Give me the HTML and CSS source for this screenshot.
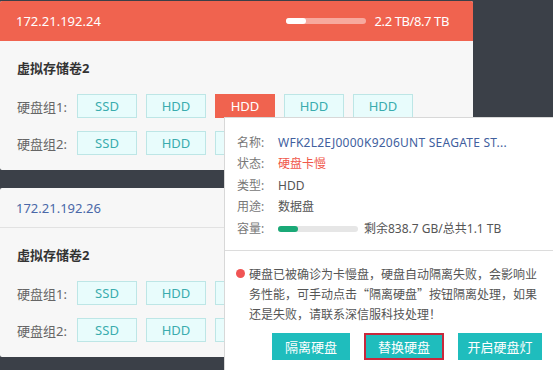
FILE: index.html
```html
<!DOCTYPE html>
<html lang="zh-CN">
<head>
  <meta charset="UTF-8">
  <meta name="viewport" content="width=device-width, initial-scale=1.0">
  <title>存储节点</title>
  <link rel="stylesheet" href="styles.css">
</head>
<body>
  <div class="node-list">
    <div class="node-card alert">
      <div class="node-header">
        <span class="node-ip">172.21.192.24</span>
        <div class="node-usage">
          <div class="usage-bar"><div class="usage-fill" style="width: 26%"></div></div>
          <span class="usage-text">2.2 TB/8.7 TB</span>
        </div>
      </div>
      <div class="node-body">
        <h3 class="volume-title">虚拟存储卷2</h3>
        <div class="disk-row">
          <span class="disk-label">硬盘组1:</span>
          <span class="disk">SSD</span>
          <span class="disk">HDD</span>
          <span class="disk disk-bad">HDD</span>
          <span class="disk">HDD</span>
          <span class="disk">HDD</span>
        </div>
        <div class="disk-row">
          <span class="disk-label">硬盘组2:</span>
          <span class="disk">SSD</span>
          <span class="disk">HDD</span>
          <span class="disk">HDD</span>
        </div>
      </div>
    </div>

    <div class="node-card">
      <div class="node-header">
        <span class="node-ip">172.21.192.26</span>
      </div>
      <div class="node-body">
        <h3 class="volume-title">虚拟存储卷2</h3>
        <div class="disk-row">
          <span class="disk-label">硬盘组1:</span>
          <span class="disk">SSD</span>
          <span class="disk">HDD</span>
          <span class="disk">HDD</span>
        </div>
        <div class="disk-row">
          <span class="disk-label">硬盘组2:</span>
          <span class="disk">SSD</span>
          <span class="disk">HDD</span>
          <span class="disk">HDD</span>
        </div>
      </div>
    </div>
  </div>

  <div class="disk-popover">
    <div class="disk-info">
      <div class="info-row"><span class="info-label">名称:</span><span class="info-value info-name">WFK2L2EJ0000K9206UNT SEAGATE ST...</span></div>
      <div class="info-row"><span class="info-label">状态:</span><span class="info-value info-bad">硬盘卡慢</span></div>
      <div class="info-row"><span class="info-label">类型:</span><span class="info-value">HDD</span></div>
      <div class="info-row"><span class="info-label">用途:</span><span class="info-value">数据盘</span></div>
      <div class="info-row">
        <span class="info-label">容量:</span>
        <div class="cap-bar"><div class="cap-fill" style="width: 25%"></div></div>
        <span class="info-value">剩余838.7 GB/总共1.1 TB</span>
      </div>
    </div>
    <div class="disk-alert">
      <div class="alert-msg">
        <span class="alert-dot"></span>
        <p>硬盘已被确诊为卡慢盘，硬盘自动隔离失败，会影响业务性能，可手动点击“隔离硬盘”按钮隔离处理，如果还是失败，请联系深信服科技处理！</p>
      </div>
      <div class="alert-actions">
        <button class="action-btn">隔离硬盘</button>
        <button class="action-btn active">替换硬盘</button>
        <button class="action-btn wide">开启硬盘灯</button>
      </div>
    </div>
  </div>
</body>
</html>
```

FILE: styles.css
```css
* {
  margin: 0;
  padding: 0;
  box-sizing: border-box;
  font-family: "Noto Sans", "Noto Sans CJK SC", sans-serif;
}

body {
  background-color: #3b4048;
  color: #333;
  height: 370px;
  overflow: hidden;
  position: relative;
}

.node-list {
  padding-top: 1px;
  display: flex;
  flex-direction: column;
  gap: 18px;
}

.node-card {
  width: 473px;
  background: #f7f7f7;
  border-radius: 2px;
  overflow: hidden;
}

.node-header {
  height: 40px;
  padding: 0 24px 0 16px;
  display: flex;
  justify-content: space-between;
  align-items: center;
  border-bottom: 1px solid #e2e2e2;
}

.node-ip {
  font-size: 13px;
  color: #4a68a8;
}

.alert .node-header {
  background: #f0634f;
  border-bottom-color: #f0634f;
}

.alert .node-ip {
  color: #fff;
}

.node-usage {
  display: flex;
  align-items: center;
  gap: 9px;
}

.usage-bar {
  width: 80px;
  height: 6px;
  border-radius: 3px;
  background: rgba(255, 255, 255, 0.45);
}

.usage-fill {
  height: 100%;
  border-radius: 3px;
  background: #fff;
}

.usage-text {
  color: #fff;
  font-size: 13px;
  letter-spacing: -0.4px;
}

.node-body {
  padding: 18px 17px 15px;
}

.volume-title {
  font-size: 13px;
  font-weight: bold;
  line-height: 18px;
  color: #333;
  margin-bottom: 17px;
}

.disk-row {
  display: flex;
  align-items: center;
  gap: 9px;
}

.disk-row + .disk-row {
  margin-top: 13px;
}

.disk-label {
  width: 51px;
  font-size: 13px;
  color: #666;
}

.disk {
  width: 60px;
  height: 24px;
  line-height: 22px;
  text-align: center;
  font-size: 13px;
  color: #3aacae;
  background: #e8fcfc;
  border: 1px solid #bde6e6;
}

.disk-bad {
  background: #f0634f;
  border-color: #f0634f;
  color: #fff;
}

.disk-popover {
  position: absolute;
  left: 224px;
  top: 117px;
  width: 340px;
  height: 270px;
  background: #fff;
  border: 1px solid #d8d8d8;
}

.disk-info {
  padding: 14px 12px 10px;
  border-bottom: 1px solid #dcdcdc;
}

.info-row {
  display: flex;
  align-items: center;
  height: 21.5px;
  font-size: 12px;
  line-height: 16px;
  white-space: nowrap;
}

.info-label {
  width: 41px;
  flex-shrink: 0;
  color: #777;
}

.info-value {
  color: #555;
}

.info-name {
  color: #41609e;
  letter-spacing: 0.25px;
}

.info-bad {
  color: #f0584a;
}

.cap-bar {
  width: 80px;
  height: 6px;
  border-radius: 3px;
  background: #e6e6e6;
  margin-right: 6px;
}

.cap-fill {
  height: 100%;
  border-radius: 3px;
  background: #1aa977;
}

.disk-alert {
  padding: 13px 11px;
}

.alert-msg {
  display: flex;
  align-items: flex-start;
  gap: 4px;
}

.alert-dot {
  width: 9px;
  height: 9px;
  margin-top: 5px;
  border-radius: 50%;
  background: #f05454;
  flex-shrink: 0;
}

.alert-msg p {
  width: 292px;
  font-family: "Noto Sans CJK SC", sans-serif;
  font-size: 12px;
  line-height: 20px;
  color: #555;
}

.alert-actions {
  display: flex;
  gap: 14px;
  margin-top: 9px;
  padding-left: 36px;
}

.action-btn {
  width: 78px;
  height: 27px;
  border: 2px solid #1fbdbd;
  background: #1fbdbd;
  color: #fff;
  font-family: "Noto Sans CJK SC", sans-serif;
  font-size: 13px;
  line-height: 23px;
  white-space: nowrap;
  cursor: pointer;
}

.action-btn.active {
  width: 80px;
  border-color: #c9283c;
}

.action-btn.wide {
  width: 84px;
}
```
